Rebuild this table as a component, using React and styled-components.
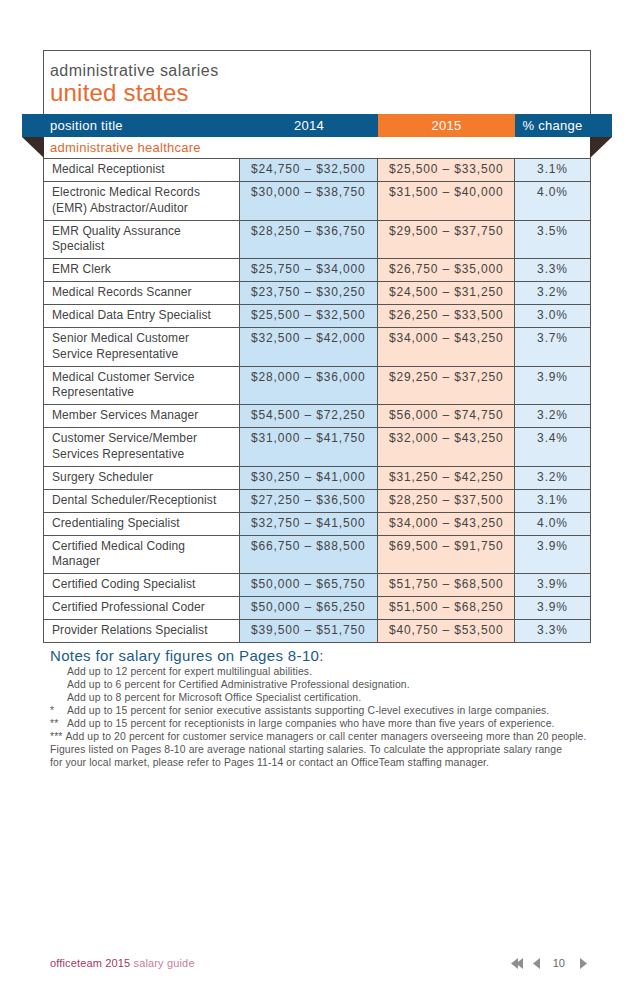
import React from "react";
import styled, { createGlobalStyle } from "styled-components";

const GlobalStyle = createGlobalStyle`
  body {
    margin: 0;
    background: #fff;
    font-family: "Liberation Sans", Arial, sans-serif;
  }
`;

const BORDER = "#555";
const BLUE = "#0c5a8b";
const ORANGE = "#f47a2c";

const Page = styled.div`
  width: 638px;
  min-height: 986px;
  display: flex;
  flex-direction: column;
  padding-top: 50px;
  box-sizing: border-box;
`;

const Sheet = styled.div`
  margin-left: 43px;
  width: 548px;
  box-sizing: border-box;
  border: 1px solid ${BORDER};
  border-bottom: none;
`;

const TitleBlock = styled.div`
  height: 63px;
  padding: 11px 0 0 6px;
  box-sizing: border-box;
`;

const Overline = styled.div`
  font-size: 16px;
  letter-spacing: 0.45px;
  color: #555;
  line-height: 18px;
`;

const Headline = styled.div`
  font-size: 24px;
  color: #e86a2c;
  line-height: 26px;
  letter-spacing: 0.2px;
`;

const HeaderBar = styled.div`
  position: relative;
  margin: 0 -22px;
  padding: 0 22px;
  height: 23px;
  background: ${BLUE};
  display: grid;
  grid-template-columns: 196px 138px 137px 75px;
  color: #fff;
  font-size: 13px;
  letter-spacing: 0.3px;

  &::before,
  &::after {
    content: "";
    position: absolute;
    top: 100%;
    width: 22px;
    height: 21px;
    background: #3a2a25;
  }
  &::before {
    left: 0;
    clip-path: polygon(0 0, 100% 0, 100% 100%);
  }
  &::after {
    right: 0;
    clip-path: polygon(0 0, 100% 0, 0 100%);
  }
`;

const HeadCell = styled.div`
  display: flex;
  align-items: center;
  justify-content: ${(p) => (p.$left ? "flex-start" : "center")};
  padding-left: ${(p) => (p.$left ? "6px" : "0")};
  background: ${(p) => (p.$accent ? ORANGE : "transparent")};
`;

const Category = styled.div`
  height: 21px;
  border-bottom: 1px solid ${BORDER};
  padding-left: 6px;
  display: flex;
  align-items: center;
  color: #e0682e;
  font-size: 13px;
  letter-spacing: 0.25px;
`;

const Table = styled.div`
  display: grid;
  grid-template-columns: 196px 138px 137px 75px;
  font-size: 12px;
  color: #444;
  line-height: 15.5px;
`;

const Cell = styled.div`
  padding: 3px 0 3.5px ${(p) => (p.$center ? "0" : p.$num ? "11px" : "8px")};
  border-bottom: 1px solid ${BORDER};
  border-right: ${(p) => (p.$last ? "none" : `1px solid ${BORDER}`)};
  background: ${(p) => p.$bg || "#fff"};
  text-align: ${(p) => (p.$center ? "center" : "left")};
  letter-spacing: ${(p) => (p.$num ? "0.85px" : "0.1px")};
  white-space: nowrap;
`;

const Notes = styled.div`
  margin-left: 50px;
  margin-top: 4px;
  color: #555;
`;

const NotesTitle = styled.div`
  font-size: 15px;
  color: #1b5b85;
  letter-spacing: 0.35px;
  line-height: 18px;
`;

const NoteLine = styled.div`
  font-size: 10.4px;
  line-height: 13px;
  letter-spacing: 0.12px;
  white-space: nowrap;
  padding-left: ${(p) => (p.$indent ? "17px" : "0")};
`;

const Marker = styled.span`
  display: inline-block;
  width: ${(p) => (p.$wide ? "auto" : "17px")};
  margin-right: ${(p) => (p.$wide ? "3px" : "0")};
`;

const Footer = styled.div`
  margin-top: auto;
  margin-bottom: 17px;
  padding: 0 50px;
  display: flex;
  align-items: center;
  justify-content: space-between;
`;

const Brand = styled.div`
  font-size: 11px;
  color: #a13b60;
  letter-spacing: 0.15px;
`;

const BrandLight = styled.span`
  color: #c7819b;
`;

const Pager = styled.div`
  display: flex;
  align-items: center;
  gap: 10px;
  margin-right: 1px;
  color: #666;
  font-size: 11px;
`;

const PageNum = styled.span`
  margin: 0 5px 0 3px;
`;

const rows = [
  [["Medical Receptionist"], "$24,750 – $32,500", "$25,500 – $33,500", "3.1%"],
  [["Electronic Medical Records", "(EMR) Abstractor/Auditor"], "$30,000 – $38,750", "$31,500 – $40,000", "4.0%"],
  [["EMR Quality Assurance", "Specialist"], "$28,250 – $36,750", "$29,500 – $37,750", "3.5%"],
  [["EMR Clerk"], "$25,750 – $34,000", "$26,750 – $35,000", "3.3%"],
  [["Medical Records Scanner"], "$23,750 – $30,250", "$24,500 – $31,250", "3.2%"],
  [["Medical Data Entry Specialist"], "$25,500 – $32,500", "$26,250 – $33,500", "3.0%"],
  [["Senior Medical Customer", "Service Representative"], "$32,500 – $42,000", "$34,000 – $43,250", "3.7%"],
  [["Medical Customer Service", "Representative"], "$28,000 – $36,000", "$29,250 – $37,250", "3.9%"],
  [["Member Services Manager"], "$54,500 – $72,250", "$56,000 – $74,750", "3.2%"],
  [["Customer Service/Member", "Services Representative"], "$31,000 – $41,750", "$32,000 – $43,250", "3.4%"],
  [["Surgery Scheduler"], "$30,250 – $41,000", "$31,250 – $42,250", "3.2%"],
  [["Dental Scheduler/Receptionist"], "$27,250 – $36,500", "$28,250 – $37,500", "3.1%"],
  [["Credentialing Specialist"], "$32,750 – $41,500", "$34,000 – $43,250", "4.0%"],
  [["Certified Medical Coding", "Manager"], "$66,750 – $88,500", "$69,500 – $91,750", "3.9%"],
  [["Certified Coding Specialist"], "$50,000 – $65,750", "$51,750 – $68,500", "3.9%"],
  [["Certified Professional Coder"], "$50,000 – $65,250", "$51,500 – $68,250", "3.9%"],
  [["Provider Relations Specialist"], "$39,500 – $51,750", "$40,750 – $53,500", "3.3%"],
];

const notes = [
  { text: "Add up to 12 percent for expert multilingual abilities.", indent: true },
  { text: "Add up to 6 percent for Certified Administrative Professional designation.", indent: true },
  { text: "Add up to 8 percent for Microsoft Office Specialist certification.", indent: true },
  { mark: "*", text: "Add up to 15 percent for senior executive assistants supporting C-level executives in large companies." },
  { mark: "**", text: "Add up to 15 percent for receptionists in large companies who have more than five years of experience." },
  { mark: "***", wide: true, text: "Add up to 20 percent for customer service managers or call center managers overseeing more than 20 people." },
  { text: "Figures listed on Pages 8-10 are average national starting salaries. To calculate the appropriate salary range" },
  { text: "for your local market, please refer to Pages 11-14 or contact an OfficeTeam staffing manager." },
];

function Arrow({ dir = "left", double }) {
  const w = double ? 12 : 7;
  return (
    <svg width={w} height="11" viewBox={`0 0 ${w} 11`} fill="#8f8f8f">
      {dir === "left" && !double && <path d="M7 0 L7 11 L0 5.5 Z" />}
      {dir === "right" && <path d="M0 0 L0 11 L7 5.5 Z" />}
      {double && (
        <>
          <path d="M7 0 L7 11 L0 5.5 Z" />
          <path d="M12 0 L12 11 L5 5.5 Z" />
        </>
      )}
    </svg>
  );
}

export default function App() {
  return (
    <>
      <GlobalStyle />
      <Page>
        <Sheet>
          <TitleBlock>
            <Overline>administrative salaries</Overline>
            <Headline>united states</Headline>
          </TitleBlock>
          <HeaderBar>
            <HeadCell $left>position title</HeadCell>
            <HeadCell>2014</HeadCell>
            <HeadCell $accent>2015</HeadCell>
            <HeadCell>% change</HeadCell>
          </HeaderBar>
          <Category>administrative healthcare</Category>
          <Table>
            {rows.map(([name, a, b, pct], i) => (
              <React.Fragment key={i}>
                <Cell>
                  {name.map((line, j) => (
                    <div key={j}>{line}</div>
                  ))}
                </Cell>
                <Cell $bg="#c8e2f5" $num>{a}</Cell>
                <Cell $bg="#fde0cf" $num>{b}</Cell>
                <Cell $bg="#dcedf9" $num $center $last>{pct}</Cell>
              </React.Fragment>
            ))}
          </Table>
        </Sheet>
        <Notes>
          <NotesTitle>Notes for salary figures on Pages 8-10:</NotesTitle>
          {notes.map((n, i) => (
            <NoteLine key={i} $indent={n.indent}>
              {n.mark && <Marker $wide={n.wide}>{n.mark}</Marker>}
              {n.text}
            </NoteLine>
          ))}
        </Notes>
        <Footer>
          <Brand>
            officeteam 2015 <BrandLight>salary guide</BrandLight>
          </Brand>
          <Pager>
            <Arrow double />
            <Arrow />
            <PageNum>10</PageNum>
            <Arrow dir="right" />
          </Pager>
        </Footer>
      </Page>
    </>
  );
}
